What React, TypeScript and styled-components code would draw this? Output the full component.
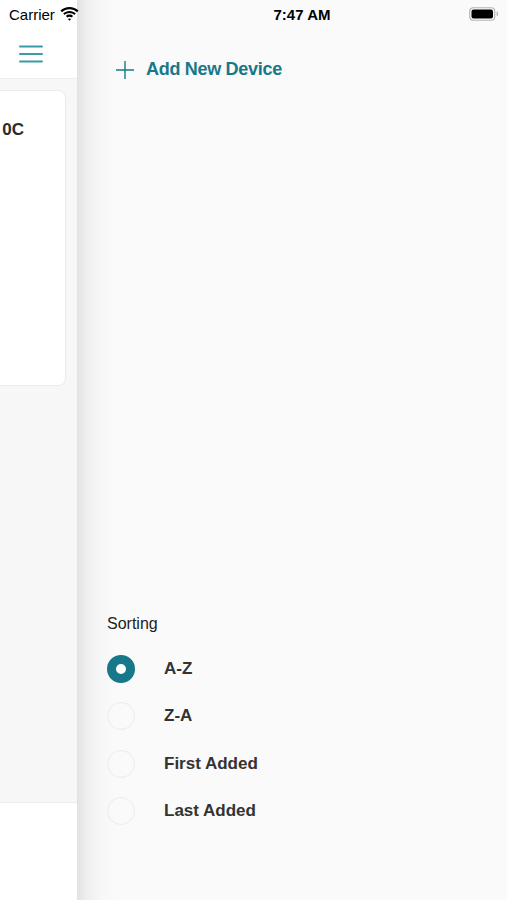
import React from 'react';
import styled, { createGlobalStyle } from 'styled-components';

const GlobalStyle = createGlobalStyle`
  html, body {
    margin: 0;
    padding: 0;
    background: #ffffff;
    font-family: "Liberation Sans", Arial, sans-serif;
  }
  * { box-sizing: border-box; }
`

const TEAL = '#17788a'

const sortOptions = ['A-Z', 'Z-A', 'First Added', 'Last Added']

const WifiIcon = () => (
  <svg width="19" height="14" viewBox="0 0 19 14">
    <path d="M9.5 2.2c2.9 0 5.5 1.1 7.5 3l1.5-1.6C16.1 1.4 13 0 9.5 0S2.9 1.4.5 3.6L2 5.2c2-1.9 4.6-3 7.5-3z" fill="#000" />
    <path d="M9.5 6c1.8 0 3.5.7 4.8 1.9l1.5-1.6C14.1 4.8 11.9 3.9 9.5 3.9S4.9 4.8 3.2 6.3l1.5 1.6C6 6.7 7.7 6 9.5 6z" fill="#000" />
    <path d="M9.5 9.8c.8 0 1.5.3 2.1.8l1.5-1.6c-1-.9-2.2-1.4-3.6-1.4s-2.6.5-3.6 1.4l1.5 1.6c.6-.5 1.3-.8 2.1-.8zM9.5 13.8l1.6-1.7c-.4-.4-1-.6-1.6-.6s-1.2.2-1.6.6z" fill="#000" />
  </svg>
)

const BatteryIcon = () => (
  <svg width="30" height="14" viewBox="0 0 30 14">
    <rect x="0.75" y="0.75" width="25" height="12.5" rx="3.5" fill="none" stroke="#b5b5b5" strokeWidth="1.2" />
    <rect x="2.5" y="2.5" width="21.5" height="9" rx="2" fill="#000" />
    <path d="M27.6 4.6c1 .3 1.6 1.2 1.6 2.4s-.6 2.1-1.6 2.4z" fill="#b5b5b5" />
  </svg>
)

const MenuIcon = () => (
  <svg width="24" height="18" viewBox="0 0 24 18">
    <path d="M1 1.5h22M1 9h22M1 16.5h22" stroke="#3b9aa5" strokeWidth="2" strokeLinecap="round" />
  </svg>
)

const PlusIcon = () => (
  <svg width="20" height="20" viewBox="0 0 20 20">
    <path d="M10 1v18M1 10h18" stroke={TEAL} strokeWidth="1.4" />
  </svg>
)

const App = () => {
  const selected = 'A-Z'
  return (
    <Screen>
      <GlobalStyle />
      <StatusBar>
        <Carrier>
          Carrier
          <WifiIcon />
        </Carrier>
        <Clock>7:47 AM</Clock>
        <BatteryIcon />
      </StatusBar>

      <PagePane>
        <PageHeader>
          <MenuIcon />
        </PageHeader>
        <PageBody>
          <DeviceCard>
            <DeviceName>Device 0C</DeviceName>
          </DeviceCard>
        </PageBody>
        <TabBar />
      </PagePane>

      <Drawer>
        <AddButton>
          <PlusIcon />
          <AddLabel>Add New Device</AddLabel>
        </AddButton>

        <SortSection>
          <SortTitle>Sorting</SortTitle>
          <SortList>
            {sortOptions.map((option) => (
              <SortRow key={option}>
                <Radio checked={option === selected} />
                <SortLabel>{option}</SortLabel>
              </SortRow>
            ))}
          </SortList>
        </SortSection>
      </Drawer>
    </Screen>
  )
};

const Screen = styled.div`
  position: relative;
  width: 507px;
  height: 900px;
  display: flex;
  overflow: hidden;
`
const StatusBar = styled.div`
  position: absolute;
  top: 0;
  left: 0;
  right: 0;
  height: 28px;
  display: flex;
  align-items: center;
  justify-content: space-between;
  padding: 0 8px 0 9px;
  z-index: 2;
`
const Carrier = styled.div`
  display: flex;
  align-items: center;
  gap: 5px;
  width: 120px;
  font-size: 15px;
  color: #000;
`
const Clock = styled.div`
  font-size: 15px;
  font-weight: bold;
  color: #000;
  margin-left: 6px;
`
const PagePane = styled.div`
  width: 77px;
  flex-shrink: 0;
  display: flex;
  flex-direction: column;
  background: #f7f7f7;
  overflow: hidden;
`
const PageHeader = styled.div`
  height: 79px;
  flex-shrink: 0;
  background: #ffffff;
  border-bottom: 1px solid #ededed;
  display: flex;
  align-items: flex-end;
  padding: 0 0 15px 19px;
`
const PageBody = styled.div`
  flex: 1;
  display: flex;
  justify-content: flex-end;
  align-items: flex-start;
  padding: 11px 11px 0 0;
`
const DeviceCard = styled.div`
  width: 320px;
  flex-shrink: 0;
  height: 296px;
  background: #ffffff;
  border: 1px solid #ebebeb;
  border-radius: 8px;
  display: flex;
  justify-content: flex-end;
  padding: 29px 41px 0 0;
`
const DeviceName = styled.div`
  font-size: 17px;
  font-weight: bold;
  color: #2b2b2b;
  white-space: nowrap;
`
const TabBar = styled.div`
  height: 98px;
  flex-shrink: 0;
  background: #ffffff;
  border-top: 1px solid #ededed;
`
const Drawer = styled.div`
  flex: 1;
  display: flex;
  flex-direction: column;
  background: linear-gradient(to right, #e2e2e2 0px, #efefef 10px, #f7f7f7 24px, #fafafa 40px);
  padding: 0 0 75px 30px;
`
const AddButton = styled.div`
  display: flex;
  align-items: center;
  gap: 11px;
  margin-top: 59px;
  padding-left: 8px;
`
const AddLabel = styled.span`
  font-size: 18px;
  font-weight: bold;
  color: ${TEAL};
  letter-spacing: -0.3px;
`
const SortSection = styled.div`
  margin-top: auto;
`
const SortTitle = styled.div`
  font-size: 16px;
  color: #222;
  margin-bottom: 22px;
`
const SortList = styled.div`
  display: flex;
  flex-direction: column;
  gap: 19.5px;
`
const SortRow = styled.div`
  display: flex;
  align-items: center;
  gap: 29px;
  height: 28px;
`
const Radio = styled.span<{ checked: boolean }>`
  width: 28px;
  height: 28px;
  border-radius: 50%;
  flex-shrink: 0;
  background: ${({ checked }) => (checked ? '#ffffff' : 'transparent')};
  border: ${({ checked }) => (checked ? `9px solid ${TEAL}` : '1.5px solid #ececec')};
`
const SortLabel = styled.span`
  font-size: 17px;
  font-weight: bold;
  color: #333;
`

export default App;
